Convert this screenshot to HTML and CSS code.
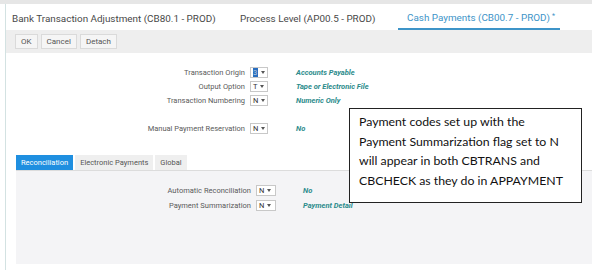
FILE: index.html
```html
<!DOCTYPE html>
<html>
<head>
<meta charset="utf-8">
<link rel="stylesheet" href="styles.css">
</head>
<body>
<div class="topband"></div>
<div class="window">
  <div class="doc-tabs">
    <div class="doc-tab t1">Bank Transaction Adjustment (CB80.1 - PROD)</div>
    <div class="doc-tab t2">Process Level (AP00.5 - PROD)</div>
    <div class="doc-tab t3 active">Cash Payments (CB00.7 - PROD) <span class="star">*</span></div>
  </div>
  <div class="toolbar">
    <button class="btn">OK</button>
    <button class="btn">Cancel</button>
    <button class="btn">Detach</button>
  </div>
  <div class="form">
    <div class="row">
      <span class="lbl">Transaction Origin</span>
      <span class="sel"><span class="v hl">3</span><span class="caret"></span></span>
      <span class="val">Accounts Payable</span>
    </div>
    <div class="row">
      <span class="lbl">Output Option</span>
      <span class="sel"><span class="v">T</span><span class="caret"></span></span>
      <span class="val">Tape or Electronic File</span>
    </div>
    <div class="row">
      <span class="lbl">Transaction Numbering</span>
      <span class="sel"><span class="v">N</span><span class="caret"></span></span>
      <span class="val">Numeric Only</span>
    </div>
    <div class="row gap">
      <span class="lbl">Manual Payment Reservation</span>
      <span class="sel"><span class="v">N</span><span class="caret"></span></span>
      <span class="val">No</span>
    </div>
  </div>
  <div class="sub">
    <div class="sub-tabs">
      <div class="sub-tab active">Reconciliation</div>
      <div class="sub-tab">Electronic Payments</div>
      <div class="sub-tab">Global</div>
    </div>
    <div class="panel">
      <div class="row">
        <span class="lbl">Automatic Reconciliation</span>
        <span class="sel"><span class="v">N</span><span class="caret"></span></span>
        <span class="val">No</span>
      </div>
      <div class="row">
        <span class="lbl">Payment Summarization</span>
        <span class="sel"><span class="v">N</span><span class="caret"></span></span>
        <span class="val">Payment Detail</span>
      </div>
    </div>
  </div>
</div>
<div class="callout">Payment codes set up with the<br>Payment Summarization flag set to N<br>will appear in both CBTRANS and<br>CBCHECK as they do in APPAYMENT</div>
</body>
</html>
```
FILE: styles.css
```css
html, body {
  margin: 0;
  padding: 0;
  background: #ffffff;
  width: 600px;
  height: 270px;
  overflow: hidden;
  font-family: Roboto, "Liberation Sans", Arial, sans-serif;
  position: relative;
}
.topband {
  height: 4px;
  width: 592px;
  background: #e6e6e6;
}
.window {
  margin-left: 5px;
  width: 587px;
  height: 266px;
  border-left: 1px solid #d3e2e2;
  box-sizing: border-box;
}
.doc-tabs {
  display: flex;
  height: 26px;
  align-items: stretch;
  font-size: 9.9px;
  color: #484848;
  white-space: nowrap;
}
.doc-tab {
  display: flex;
  align-items: center;
  padding-top: 2px;
  box-sizing: border-box;
}
.t1 { padding-left: 6px; width: 234px; }
.t2 { width: 158px; }
.t3 {
  color: #3d94c8;
  padding-left: 9px;
  width: 162px;
  border-bottom: 2px solid #3d94c8;
}
.star { font-size: 7px; margin-left: 2px; align-self: flex-start; margin-top: 6px; }
.toolbar {
  height: 23px;
  background: #eeeeee;
  display: flex;
  align-items: center;
  gap: 3px;
  padding-left: 9px;
  box-sizing: border-box;
}
.btn {
  font-family: Roboto, "Liberation Sans", Arial, sans-serif;
  font-size: 8px;
  color: #555;
  background: #f5f5f5;
  border: 1px solid #dadada;
  height: 15px;
  padding: 0 5px;
  margin: 0;
  line-height: 13px;
}
.form {
  padding-top: 12px;
  height: 101px;
  box-sizing: border-box;
}
.row {
  display: flex;
  align-items: center;
  height: 14px;
  font-size: 7.5px;
}
.row.gap { margin-top: 14px; }
.lbl {
  width: 239px;
  text-align: right;
  color: #5a5a5a;
  flex: none;
}
.sel {
  margin-left: 5px;
  width: 18px;
  height: 11px;
  border: 1px solid #c8c8c8;
  background: #fff;
  box-sizing: border-box;
  display: flex;
  align-items: center;
  padding-left: 2px;
  gap: 3px;
  flex: none;
}
.v { font-size: 7.5px; color: #333; line-height: 9px; }
.v.hl { background: #2a6ebf; color: #bcd; width: 5px; }
.caret {
  width: 0; height: 0;
  border-left: 2.5px solid transparent;
  border-right: 2.5px solid transparent;
  border-top: 3px solid #555;
}
.val {
  margin-left: 28px;
  color: #2b8b8b;
  font-style: italic;
  font-weight: bold;
  font-size: 7.5px;
}
.sub {
  padding-left: 10px;
}
.sub-tabs {
  display: flex;
  gap: 2px;
  height: 16px;
  border-bottom: 1px solid #dcdcdc;
  align-items: flex-end;
}
.sub-tab {
  height: 15px;
  font-size: 7.5px;
  color: #555;
  background: #efefef;
  padding: 0 5px;
  display: flex;
  align-items: center;
}
.sub-tab.active {
  background: #1f8fe0;
  color: #fff;
}
.panel {
  background: #f4f4f6;
  height: 93px;
  padding-top: 12px;
  box-sizing: border-box;
}
.panel .row { height: 15px; }
.panel .lbl { width: 235px; }
.panel .sel { margin-left: 5px; width: 20px; }
.panel .val { margin-left: 27px; }
.callout {
  position: absolute;
  left: 349px;
  top: 108px;
  width: 233px;
  height: 95px;
  box-sizing: border-box;
  border: 1.5px solid #222;
  background: #fff;
  padding: 3px 0 0 9px;
  font-family: Lato, "Open Sans", sans-serif;
  font-size: 12.3px;
  line-height: 19.5px;
  color: #111;
  white-space: nowrap;
}
```
